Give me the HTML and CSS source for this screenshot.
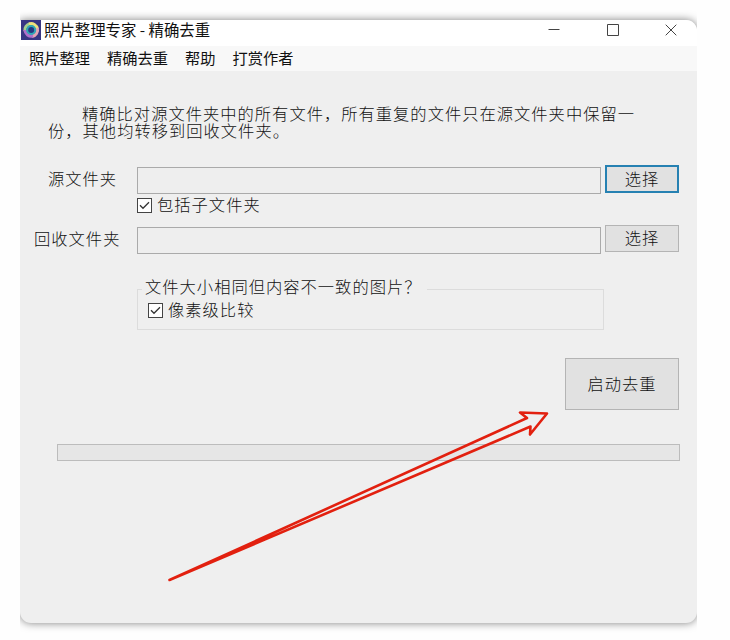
FILE: index.html
```html
<!DOCTYPE html>
<html lang="zh-CN">
<head>
<meta charset="utf-8">
<title>照片整理专家</title>
<link rel="stylesheet" href="styles.css">
</head>
<body>
<div class="window">
  <header class="titlebar">
    <svg class="logo" width="20" height="20" viewBox="0 0 20 20">
      <rect width="20" height="20" fill="#373683"/>
      <g fill="none" stroke-width="3.2">
        <path d="M4 11A6.500 6.500 0 0 1 9 3.700" stroke="#a5cf8e"/>
        <path d="M8 4A6.300 6.300 0 0 1 16.300 9" stroke="#eee27c"/>
        <path d="M16.200 8A6.500 6.500 0 0 1 11 16.300" stroke="#e3a6b4"/>
        <path d="M12 16A6.500 6.500 0 0 1 4 10" stroke="#b06fcb"/>
      </g>
      <circle cx="10.200" cy="10" r="4" fill="#26377f" stroke="#2fa9b8" stroke-width="2"/>
    </svg>
    <span class="caption">照片整理专家 - 精确去重</span>
    <div class="controls">
      <svg width="12" height="12" viewBox="0 0 12 12"><path d="M.5 5.5h11"/></svg>
      <svg width="12" height="12" viewBox="0 0 12 12"><path d="M.5 .5h11v11H.5z"/></svg>
      <svg width="12" height="12" viewBox="0 0 12 12"><path d="M.7 .7l10.6 10.6M11.3 .7L.7 11.3"/></svg>
    </div>
  </header>
  <nav class="menu"><span>照片整理</span><span>精确去重</span><span>帮助</span><span>打赏作者</span></nav>
  <main class="content">
    <p class="intro">精确比对源文件夹中的所有文件，所有重复的文件只在源文件夹中保留一<br>份，其他均转移到回收文件夹。</p>
    <div class="row">
      <span class="label source">源文件夹</span><div class="field"></div><button class="pick active">选择</button>
    </div>
    <label class="check sub"><svg class="box" width="15" height="15" viewBox="0 0 15 15"><rect x=".5" y=".5" width="14" height="14"/><path d="M3 7.3l3 3 6-6"/></svg><span>包括子文件夹</span></label>
    <div class="row">
      <span class="label">回收文件夹</span><div class="field"></div><button class="pick">选择</button>
    </div>
    <fieldset class="group">
      <legend><span>文件大小相同但内容不一致的图片？</span></legend>
      <label class="check"><svg class="box" width="15" height="15" viewBox="0 0 15 15"><rect x=".5" y=".5" width="14" height="14"/><path d="M3 7.3l3 3 6-6"/></svg><span>像素级比较</span></label>
    </fieldset>
    <button class="start">启动去重</button>
    <div class="progress"></div>
  </main>
</div>
<svg class="arrow" width="730" height="640" viewBox="0 0 730 640">
  <path d="M169.500 580L527 418L520 412.500L547 413.500L530 434.500L530.500 426.500Z"/>
</svg>
</body>
</html>
```
FILE: styles.css
```css
* { box-sizing: border-box; }
body {
  margin: 0;
  width: 730px;
  height: 640px;
  overflow: hidden;
  padding: 20px 0 0 20px;
  background: #fefefe;
  font-family: "Noto Sans CJK SC", sans-serif;
  color: #111;
}
.window {
  width: 677px;
  height: 603px;
  border-radius: 2px 11px 11px 11px;
  background: #efefef;
  box-shadow: 0 0 8px rgba(0, 0, 0, .5);
  clip-path: inset(-16px 0 -16px 0);
}
.titlebar {
  display: flex;
  align-items: flex-start;
  height: 26px;
  padding-right: 20px;
  background: #fff;
  border-radius: 2px 11px 0 0;
}
.logo { margin: 0 3px 0 1px; flex: none; }
.caption { font-size: 15.400px; line-height: 18px; color: #111; }
.controls { display: flex; gap: 46.500px; margin-left: auto; margin-top: 4px; }
.controls path { fill: none; stroke: #444; stroke-width: 1; }
.menu {
  display: flex;
  gap: 17px;
  height: 25px;
  padding-left: 9px;
  background: #f8f8f8;
  font-size: 15.250px;
  line-height: 23px;
  color: #111;
}
.content { padding-top: 34px; font-size: 16.300px; letter-spacing: 1px; font-weight: 300; }
.intro { margin: 0 0 0 28px; text-indent: 34px; line-height: 17px; white-space: nowrap; }
.row { display: flex; height: 28px; }
.intro + .row { margin-top: 26px; }
.label { width: 117px; padding-left: 14px; line-height: 26px; }
.source { padding-left: 28px; }
.field { width: 464px; height: 27px; margin: 2px 4px 0 0; border: 1px solid #aaa; background: #eee; }
button {
  padding: 0;
  border: 1px solid #b4b4b4;
  background: #e1e1e1;
  color: inherit;
  font: inherit;
  letter-spacing: inherit;
}
.pick { width: 74px; height: 27px; padding-bottom: 2px; line-height: 23px; }
.active { height: 28px; border: 2px solid #2681b2; line-height: 22px; }
.check { display: flex; align-items: center; gap: 5px; height: 22px; }
.check span { margin-top: -3px; }
.box { flex: none; }
.box rect { fill: #fff; stroke: #444; }
.box path { fill: none; stroke: #333; stroke-width: 1.300; }
.sub { margin: 1px 0 9px 117px; }
.group {
  width: 467px;
  height: 51px;
  margin: 26px 0 0 117px;
  padding: 0 0 0 10px;
  border: 1px solid #dcdcdc;
  min-width: 0;
}
legend { height: 21px; margin-left: -6px; padding: 0 5px 0 3px; line-height: 15px; }
.group .check { margin-top: -1px; }
.start { display: block; width: 114px; height: 52px; margin: 28px 0 0 545px; padding-bottom: 2px; }
.progress { width: 623px; height: 17px; margin: 34px 0 0 37px; border: 1px solid #bcbcbc; background: #e6e6e6; }
.arrow { position: absolute; left: 0; top: 0; pointer-events: none; }
.arrow path { fill: none; stroke: #e2200f; stroke-width: 2.600; stroke-linejoin: round; }
```
